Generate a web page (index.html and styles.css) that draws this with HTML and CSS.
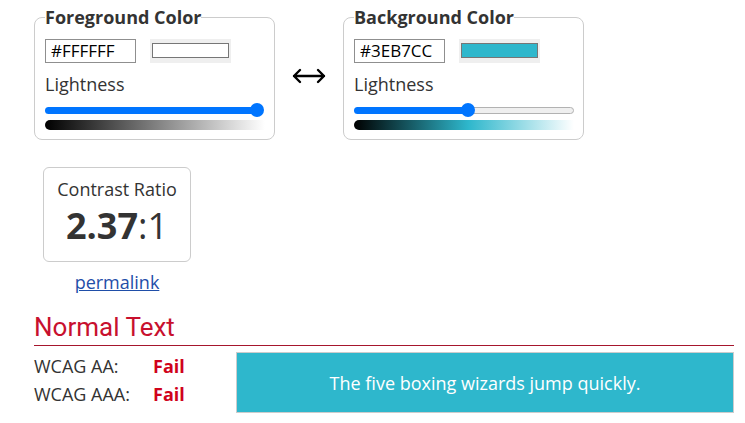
FILE: index.html
```html
<!DOCTYPE html>
<html lang="en">
<head>
<meta charset="utf-8">
<title>Contrast Checker</title>
<link rel="stylesheet" href="styles.css">
</head>
<body>
<div class="page">
  <div class="pickers">
    <fieldset class="picker">
      <legend>Foreground Color</legend>
      <div class="inputs">
        <div class="hex">#FFFFFF</div>
        <div class="swatch"><span class="swatch-fill fg-fill"></span></div>
      </div>
      <div class="label">Lightness</div>
      <div class="slider">
        <div class="fill" style="width:212px"></div>
        <div class="thumb"></div>
      </div>
      <div class="gradient fg-grad"></div>
    </fieldset>
    <div class="swap">
      <svg width="34" height="16" viewBox="0 0 34 16" aria-hidden="true">
        <path d="M2 8 H32 M8 2 L2 8 L8 14 M26 2 L32 8 L26 14" fill="none" stroke="#000" stroke-width="2.4" stroke-linecap="round" stroke-linejoin="round"/>
      </svg>
    </div>
    <fieldset class="picker">
      <legend>Background Color</legend>
      <div class="inputs">
        <div class="hex">#3EB7CC</div>
        <div class="swatch"><span class="swatch-fill bg-fill"></span></div>
      </div>
      <div class="label">Lightness</div>
      <div class="slider">
        <div class="fill" style="width:114px"></div>
        <div class="thumb"></div>
        <div class="rest"></div>
      </div>
      <div class="gradient bg-grad"></div>
    </fieldset>
  </div>

  <div class="result">
    <div class="ratio-box">
      <div class="ratio-label">Contrast Ratio</div>
      <div class="ratio"><b>2.37</b>:1</div>
    </div>
    <a class="permalink" href="#">permalink</a>
  </div>

  <h2 class="section-title">Normal Text</h2>
  <div class="normal">
    <div class="grades">
      <div class="grade"><span class="grade-name">WCAG AA:</span><span class="fail">Fail</span></div>
      <div class="grade"><span class="grade-name">WCAG AAA:</span><span class="fail">Fail</span></div>
    </div>
    <div class="sample">The five boxing wizards jump quickly.</div>
  </div>
</div>
</body>
</html>
```

FILE: styles.css
```css
* { box-sizing: border-box; }

body {
  margin: 0;
  background: #fff;
  color: #333;
  font-family: "Open Sans", "Liberation Sans", sans-serif;
  font-size: 18px;
}

.page {
  width: 734px;
  padding: 5px 0 0 34px;
}

.pickers {
  display: flex;
  align-items: flex-start;
}

.picker {
  margin: 0;
  width: 241px;
  padding: 10px 9px 9px 10px;
  border: 1px solid #ccc;
  border-radius: 8px;
  min-width: 0;
}

.picker legend {
  padding: 0;
  font-weight: 700;
  font-size: 18px;
  line-height: 24px;
  color: #333;
}

.inputs {
  display: flex;
  gap: 14px;
}

.hex {
  width: 91px;
  height: 24px;
  border: 1px solid #8f8f8f;
  padding: 0 0 0 5px;
  font-size: 17px;
  line-height: 22px;
  color: #000;
}

.swatch {
  width: 81px;
  height: 24px;
  background: #efefef;
  padding: 4px 2px 5px 2px;
  display: flex;
}

.swatch-fill {
  flex: 1;
  border: 1px solid #767676;
}

.fg-fill { background: #fff; }
.bg-fill { background: #2eb7cc; }

.label {
  margin-top: 9px;
  line-height: 25px;
  color: #333;
}

.slider {
  margin-top: 6px;
  height: 14px;
  width: 220px;
  display: flex;
  align-items: center;
}

.fill {
  flex: none;
  height: 7px;
  background: #0075ff;
  border-radius: 4px 0 0 4px;
  margin-right: -7px;
}

.thumb {
  flex: none;
  width: 14px;
  height: 14px;
  border-radius: 50%;
  background: #0075ff;
  position: relative;
  z-index: 1;
}

.rest {
  flex: 1;
  height: 7px;
  margin-left: -7px;
  background: #efefef;
  border: 1px solid #b2b2b2;
  border-radius: 4px;
}

.gradient {
  margin-top: 3px;
  width: 220px;
  height: 10px;
  border-radius: 5px 0 0 5px;
}

.fg-grad { background: linear-gradient(to right, #000, #fff); }
.bg-grad { background: linear-gradient(to right, #000, #2eb7cc 52%, #fff); }

.swap {
  flex: none;
  margin: 63px 17px 0 17px;
  width: 34px;
  height: 16px;
  display: flex;
}

.result {
  margin: 27px 0 0 9px;
  width: 148px;
  display: flex;
  flex-direction: column;
  align-items: center;
}

.ratio-box {
  width: 148px;
  height: 95px;
  border: 1px solid #ccc;
  border-radius: 6px;
  padding-top: 9px;
  text-align: center;
}

.ratio-label {
  line-height: 25px;
  color: #333;
}

.ratio {
  font-size: 36px;
  line-height: 48px;
  color: #333;
}

.ratio b { font-weight: 700; }

.permalink {
  margin-top: 8px;
  line-height: 25px;
  color: #1f4ea8;
  text-decoration: underline;
}

.section-title {
  margin: 17px 0 0 0;
  padding-bottom: 3px;
  font-family: Roboto, "Liberation Sans", sans-serif;
  font-weight: 400;
  font-size: 26px;
  line-height: 30px;
  color: #c8102e;
  border-bottom: 1px solid #a6162d;
}

.normal {
  margin-top: 6px;
  display: flex;
}

.grades {
  width: 202px;
  flex: none;
}

.grade {
  display: flex;
  line-height: 28px;
  height: 28px;
}

.grade-name {
  width: 119px;
  font-size: 18px;
  color: #333;
}

.fail {
  font-weight: 700;
  color: #d0021b;
}

.sample {
  flex: 1;
  height: 61px;
  background: #2eb7cc;
  border: 1px solid #ccc;
  color: #fff;
  display: flex;
  align-items: center;
  justify-content: center;
}
```
